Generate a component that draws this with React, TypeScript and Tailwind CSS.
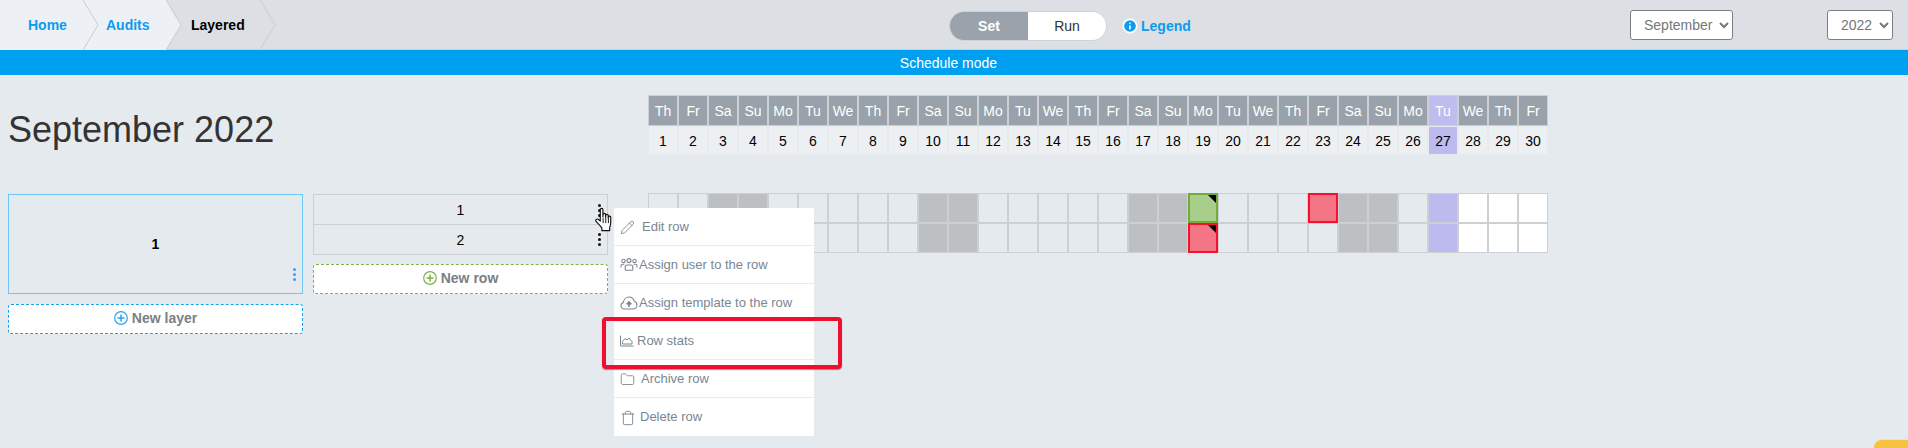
import { Info, Pencil, Folder, Trash } from "lucide-react";

const weekdays = ["Th", "Fr", "Sa", "Su", "Mo", "Tu", "We"];
const days = Array.from({ length: 30 }, (_, i) => ({ day: i + 1, name: weekdays[i % 7] }));
const weekend = [3, 4, 10, 11, 17, 18, 24, 25];
const TODAY = 27;

function UsersIcon() {
  return (
    <svg viewBox="0 0 18 14" fill="none" stroke="currentColor" strokeWidth="1.1" className="h-[14px] w-[18px]" aria-hidden="true">
      <circle cx="3.5" cy="3" r="1.7" />
      <circle cx="9" cy="2.6" r="2" />
      <circle cx="14.5" cy="3" r="1.7" />
      <path d="M1 9.5V8c0-1 .8-1.7 1.8-1.7h1.6M17 9.5V8c0-1-.8-1.7-1.8-1.7h-1.6" />
      <path d="M5.2 11.5V9c0-1.2 1-2 2-2h3.6c1 0 2 .8 2 2v2.500c0 .4-.3.7-.7.7H5.900c-.4 0-.7-.3-.7-.7z" />
    </svg>
  );
}

function CloudIcon() {
  return (
    <svg viewBox="0 0 18 14" fill="none" stroke="currentColor" strokeWidth="1.1" className="h-[14px] w-[18px]" aria-hidden="true">
      <path d="M4.500 13C2.500 13 1 11.500 1 9.700c0-1.500 1-2.800 2.400-3.200C3.700 3.500 6 1 9 1c2.700 0 4.700 1.800 5.300 4.300 1.600.5 2.700 2 2.700 3.700 0 2.200-1.800 4-4 4z" />
      <path d="M9 11V6.500M6.700 8.300 9 5.900l2.300 2.400" strokeWidth="1.700" />
    </svg>
  );
}

function StatsIcon() {
  return (
    <svg viewBox="0 0 14 12" fill="none" stroke="currentColor" strokeWidth="1" className="h-[12px] w-[14px]" aria-hidden="true">
      <path d="M.5.5v10.500h13" />
      <path d="M2.500 9V6.500l2.500-3 2 1.500 2-2 3 3.500V9z" />
    </svg>
  );
}

function HandCursor() {
  return (
    <svg viewBox="0 0 18 24" className="h-[26px] w-[19px]" aria-hidden="true">
      <path
        d="M5 2.200c0-1.600 2.500-1.600 2.500 0V9l.2-2.200c0-1.400 2.300-1.400 2.300 0V9.500l.2-1.800c0-1.400 2.300-1.400 2.300 0v2.300l.2-.8c.2-1.300 2.200-1.100 2.200.3v4.500c0 2.300-.4 3.700-1 5v3H6.500v-2.500C5 17.500 3 15.500 1.200 13.500c-1.300-1.500.5-3.200 2-2L5 13z"
        fill="#fff"
        stroke="#111"
        strokeWidth="1.100"
        strokeLinejoin="round"
      />
      <path d="M7.700 10v5M10.200 10v5M12.700 10v5" stroke="#111" strokeWidth=".9" />
    </svg>
  );
}

function Dots({ color }: { color: string }) {
  return (
    <div className={`flex flex-col gap-[2px] ${color}`}>
      <span className="h-[3px] w-[3px] rounded-full bg-current" />
      <span className="h-[3px] w-[3px] rounded-full bg-current" />
      <span className="h-[3px] w-[3px] rounded-full bg-current" />
    </div>
  );
}

function Crumb({ label, active, width, pad }: { label: string; active?: boolean; width: string; pad: string }) {
  return (
    <div className={`relative flex h-full items-center ${width} ${active ? "text-black" : "bg-[#edf1f5] text-[#0d9bf0]"}`}>
      <span className={`z-10 w-full text-sm font-semibold ${pad}`}>{label}</span>
      <svg viewBox="0 0 16 50" className="absolute top-0 -right-[16px] z-10 h-[50px] w-[16px]" aria-hidden="true">
        <path d="M0 0 15 25 0 50z" fill={active ? "#dce0e4" : "#edf1f5"} />
        <path d="M0 0 15 25 0 50" fill="none" stroke="#c8ccd0" />
      </svg>
    </div>
  );
}

function DayCell({ day, row }: { day: number; row: number }) {
  const future = day > TODAY;
  const green = row === 0 && day === 19;
  const red = (row === 0 && day === 23) || (row === 1 && day === 19);
  let tone = "border border-[#ccd0d4]";
  if (weekend.includes(day)) tone = "border border-[#ccd0d4] bg-[#bcc0c3]";
  if (day === TODAY) tone = "border border-[#ccd0d4] bg-[#bcbaee]";
  if (future) tone = "border border-[#ccd0d4] bg-white";
  if (green) tone = "border-2 border-[#72ab3a] bg-[#a9cd8a]";
  if (red) tone = "border-2 border-[#f5112e] bg-[#f47585]";
  return (
    <div className={`relative h-[30px] w-[30px] ${tone}`}>
      {day === 19 && (
        <span className="absolute top-0 right-0 h-0 w-0 border-t-[8px] border-l-[8px] border-t-black border-l-transparent" />
      )}
    </div>
  );
}

const menuItems = [
  { label: "Edit row", icon: <Pencil size={15} strokeWidth={1.4} />, gap: "gap-[7px]" },
  { label: "Assign user to the row", icon: <UsersIcon />, gap: "gap-[1px]" },
  { label: "Assign template to the row", icon: <CloudIcon />, gap: "gap-[1px]" },
  { label: "Row stats", icon: <StatsIcon />, gap: "gap-[3px]" },
  { label: "Archive row", icon: <Folder size={15} strokeWidth={1.4} />, gap: "gap-[6px]" },
  { label: "Delete row", icon: <Trash size={16} strokeWidth={1.4} />, gap: "gap-[4px]" },
];

export default function App() {
  return (
    <div className="relative h-[448px] w-[1908px] overflow-hidden bg-[#e5eaef] font-['Liberation_Sans',Arial,sans-serif] text-sm">
      {/* Top bar */}
      <header className="relative h-[50px] bg-[#dce0e4] border-b border-[#cdd1d5]">
        <nav className="flex h-[50px]">
          <Crumb label="Home" width="w-[83px]" pad="pl-[28px]" />
          <Crumb label="Audits" width="w-[83px]" pad="pl-[23px]" />
          <Crumb label="Layered" active width="w-[94px]" pad="pl-[25px]" />
        </nav>
        <div className="absolute top-[11px] left-[949px] flex items-center">
          <div className="flex h-[30px] w-[158px] overflow-hidden rounded-full border border-[#cfd3d7]">
            <span className="flex w-[78px] items-center justify-center bg-[#9aa3ab] font-bold text-white">Set</span>
            <span className="flex flex-1 items-center justify-center bg-white text-[#333]">Run</span>
          </div>
          <a className="ml-[15px] flex items-center gap-[3px] font-bold text-[#0d9bf0]">
            <Info size={16} fill="#0d9bf0" stroke="#fff" strokeWidth={2.5} />
            Legend
          </a>
        </div>
        <select defaultValue="September" className="absolute top-[10px] left-[1630px] h-[30px] w-[103px] rounded-[3px] border border-[#7b7f84] bg-white pl-[9px] text-[#777]">
          <option>September</option>
        </select>
        <select defaultValue="2022" className="absolute top-[10px] left-[1827px] h-[30px] w-[66px] rounded-[3px] border border-[#7b7f84] bg-white pl-[9px] text-[#777]">
          <option>2022</option>
        </select>
      </header>

      <div className="flex h-[25px] items-center justify-center bg-[#00a0f0] pr-[11px] text-white">Schedule mode</div>

      {/* Title + calendar head */}
      <div className="flex pt-[20px] pl-[8px]">
        <h1 className="w-[640px] pt-[14px] text-[36px] leading-[42px] text-[#333]">September 2022</h1>
        <div className="flex">
          {days.map((d) => (
            <div key={d.day} className="w-[30px]">
              <div className={`flex h-[31px] items-center justify-center border border-[#ccd0d4] text-white ${d.day === TODAY ? "bg-[#bfbcf0]" : "bg-[#99a2ab]"}`}>
                {d.name}
              </div>
              <div className={`flex h-[29px] items-center justify-center border border-[#e8ebee] text-black ${d.day === TODAY ? "bg-[#bcbaee]" : "bg-[#edf0f3]"}`}>
                {d.day}
              </div>
            </div>
          ))}
        </div>
      </div>

      {/* Layers, rows and day grid */}
      <div className="flex pt-[38px] pl-[8px]">
        <div className="w-[295px] pt-[1px]">
          <div className="relative flex h-[100px] items-center justify-center border border-[#6ec6f5] font-bold text-black">
            1
            <span className="absolute right-[6px] bottom-[12px]">
              <Dots color="text-[#3f9cf0]" />
            </span>
          </div>
          <button className="mt-[10px] flex h-[30px] w-full items-center justify-center gap-[4px] rounded-[3px] border border-dashed border-[#0da2f2] bg-white pb-[2px] font-bold text-[#7b7f84]">
            <svg viewBox="0 0 14 14" fill="none" stroke="#2ba4ee" className="h-[14px] w-[14px]" aria-hidden="true">
              <circle cx="7" cy="7" r="6.300" strokeWidth="1.200" />
              <path d="M7 3.500v7M3.500 7h7" strokeWidth="1.500" />
            </svg>
            New layer
          </button>
        </div>

        <div className="ml-[10px] w-[295px] pt-[1px]">
          <div className="border border-[#ccd0d4] text-black">
            <div className="relative flex h-[30px] items-center justify-center border-b border-[#ccd0d4]">
              1
              <span className="absolute top-[9px] right-[6px]">
                <Dots color="text-[#111]" />
              </span>
            </div>
            <div className="relative flex h-[29px] items-center justify-center">
              2
              <span className="absolute top-[8px] right-[6px]">
                <Dots color="text-[#111]" />
              </span>
            </div>
          </div>
          <button className="mt-[9px] flex h-[30px] w-full items-center justify-center gap-[4px] rounded-[3px] border border-dashed border-[#7cb342] bg-white pb-[2px] font-bold text-[#7b7f84]">
            <svg viewBox="0 0 14 14" fill="none" stroke="#7cb342" className="h-[14px] w-[14px]" aria-hidden="true">
              <circle cx="7" cy="7" r="6.300" strokeWidth="1.200" />
              <path d="M7 3.500v7M3.500 7h7" strokeWidth="1.500" />
            </svg>
            New row
          </button>
        </div>

        <div className="ml-[40px]">
          {[0, 1].map((row) => (
            <div key={row} className="flex">
              {days.map((d) => (
                <DayCell key={d.day} day={d.day} row={row} />
              ))}
            </div>
          ))}
        </div>
      </div>

      {/* Open row menu */}
      <ul className="absolute top-[208px] left-[614px] w-[200px] bg-white text-[13px] text-[#7a8691]">
        {menuItems.map((item, i) => (
          <li key={item.label} className={`flex h-[38px] items-center pt-[1px] pl-[6px] ${item.gap} ${i < 5 ? "border-b border-[#e9ecef]" : ""}`}>
            <span className="flex justify-center">{item.icon}</span>
            {item.label}
          </li>
        ))}
      </ul>

      {/* Annotation around Row stats */}
      <div className="absolute top-[317px] left-[602px] h-[52px] w-[240px] rounded-[4px] border-[4px] border-[#ee0e2f] shadow-[0_1px_1px_rgba(0,0,0,0.4)]" />

      <span className="absolute top-[207px] left-[595px]">
        <HandCursor />
      </span>

      {/* Corner of the help widget */}
      <div className="absolute top-[439px] left-[1873px] h-[20px] w-[60px] rounded-tl-[9px] border-t border-l border-[#f9e2a6] bg-[#f5c242]" />
    </div>
  );
}
